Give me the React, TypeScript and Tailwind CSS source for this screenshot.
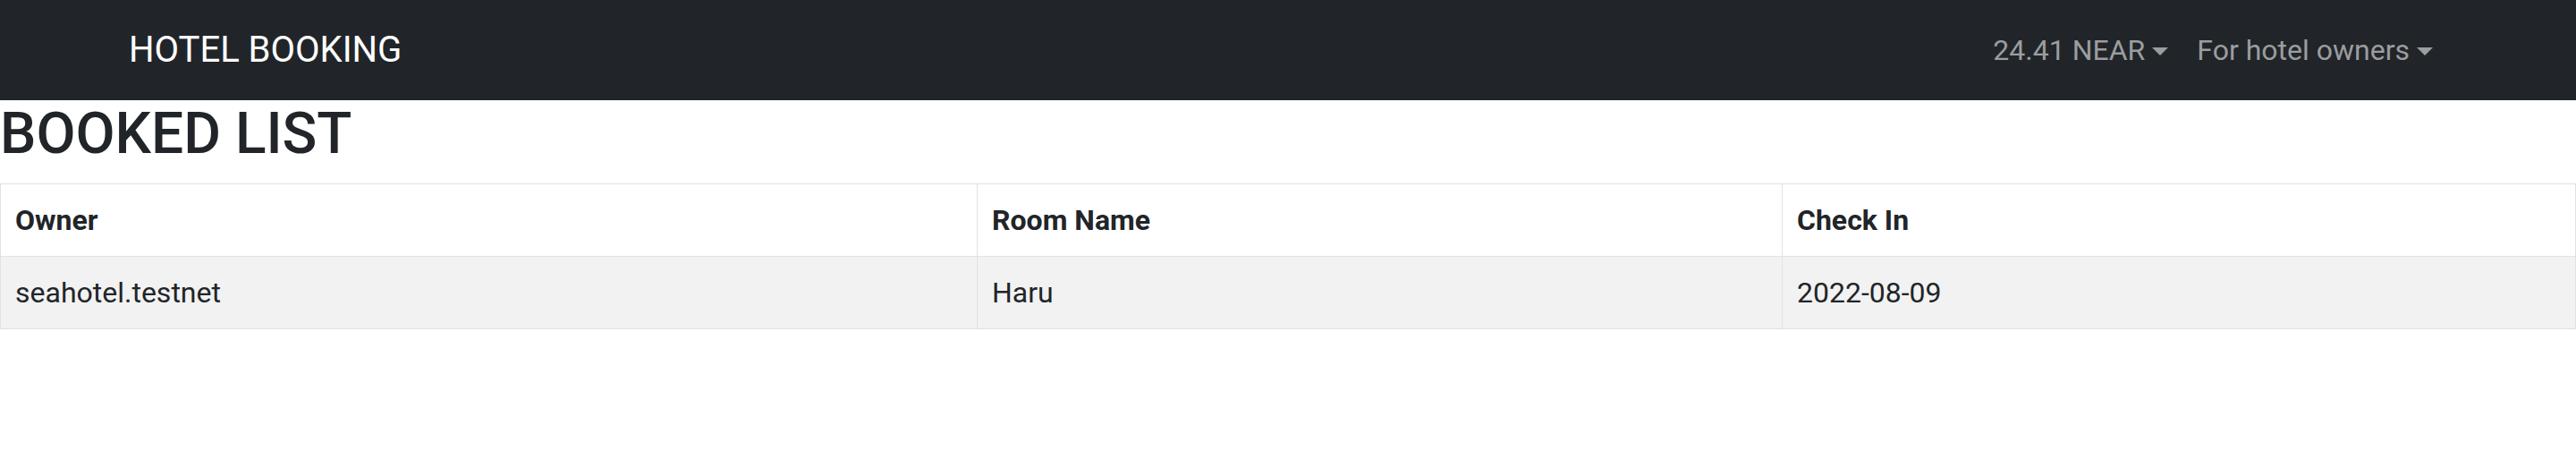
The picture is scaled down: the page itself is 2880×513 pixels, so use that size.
import React from 'react';

type Booking = {
    owner: string;
    roomName: string;
    checkIn: string;
};

const bookings: Booking[] = [
    { owner: 'seahotel.testnet', roomName: 'Haru', checkIn: '2022-08-09' },
];

const NavDropdown: React.FC<{ label: string }> = ({ label }) => (
    <a className="flex items-center px-[16px] py-[16px] text-[32px] leading-[48px] text-[#9b9d9f] cursor-pointer">
        {label}
        <span className="ml-[8px] inline-block w-0 h-0 border-t-[9.6px] border-t-current border-x-[9.6px] border-x-transparent border-b-0 translate-y-[1px]" />
    </a>
);

const App: React.FC = () => {
    return (
        <div className="min-h-screen bg-white text-[#212529] font-['Roboto','Liberation_Sans',sans-serif]">
            <nav className="bg-[#212529] py-[16px]">
                <div className="w-[2640px] mx-auto px-[24px] flex items-center justify-between">
                    <a className="py-[10px] text-[40px] leading-[60px] text-white">HOTEL BOOKING</a>
                    <div className="flex items-center">
                        <NavDropdown label="24.41 NEAR" />
                        <NavDropdown label="For hotel owners" />
                    </div>
                </div>
            </nav>

            <h2 className="mb-[16px] text-[64px] leading-[1.2] font-medium">BOOKED LIST</h2>

            <table className="w-full border-collapse text-[32px] leading-[48px]">
                <thead>
                <tr>
                    <th className="w-[1092px] border border-[#dee2e6] p-[16px] text-left font-bold">Owner</th>
                    <th className="w-[900px] border border-[#dee2e6] p-[16px] text-left font-bold">Room Name</th>
                    <th className="border border-[#dee2e6] p-[16px] text-left font-bold">Check In</th>
                </tr>
                </thead>
                <tbody>
                {bookings.map((booking, index) => (
                    <tr key={index} className="bg-[#f2f2f2]">
                        <td className="border border-[#dee2e6] p-[16px]">{booking.owner}</td>
                        <td className="border border-[#dee2e6] p-[16px]">{booking.roomName}</td>
                        <td className="border border-[#dee2e6] p-[16px]">{booking.checkIn}</td>
                    </tr>
                ))}
                </tbody>
            </table>
        </div>
    );
};

export default App;
